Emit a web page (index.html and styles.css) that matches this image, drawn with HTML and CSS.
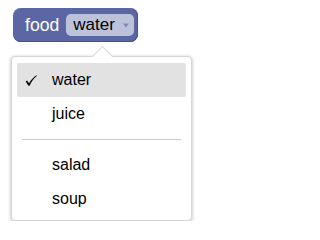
FILE: index.html
```html
<!DOCTYPE html>
<html>
<head>
<meta charset="utf-8">
<link rel="stylesheet" href="styles.css">
</head>
<body>
<div class="block">
  <span class="label">food</span>
  <span class="pill"><span class="pill-text">water</span><svg class="caret" width="6" height="5" viewBox="0 0 6 5"><path d="M0 0.5 L6 0.5 L3 4.5 Z" fill="#7d87b9"/></svg></span>
</div>
<div class="menu">
  <div class="item selected"><span class="check"><svg width="12" height="11" viewBox="0 0 12 11"><path d="M0.6 6.4 L2.2 5.6 L4 8.2 C6 4.8 8.4 2 11.6 0.2 L12 0.7 C9 3 6.6 6.4 4.6 10.8 L3.4 10.8 Z" fill="#111"/></svg></span><span class="text">water</span></div>
  <div class="item"><span class="check"></span><span class="text">juice</span></div>
  <div class="sep"></div>
  <div class="item"><span class="check"></span><span class="text">salad</span></div>
  <div class="item"><span class="check"></span><span class="text">soup</span></div>
</div>
</body>
</html>
```
FILE: styles.css
```css
html, body {
  margin: 0;
  padding: 0;
  background: #fff;
  font-family: "Liberation Sans", Arial, sans-serif;
}
.block {
  margin: 8px 0 0 13px;
  display: inline-flex;
  align-items: center;
  height: 34px;
  box-sizing: border-box;
  padding: 0 4px 0 12px;
  background: #5b67a5;
  border-radius: 8px;
  box-shadow: inset 0 -1px 0 #48528a, inset -1px 0 0 #48528a;
  gap: 7px;
}
.label {
  color: #fff;
  font-size: 17.6px;
  line-height: 20px;
}
.pill {
  display: inline-flex;
  align-items: center;
  height: 22px;
  padding: 0 5px 0 7px;
  background: #bdc2db;
  border-radius: 5px;
}
.pill-text {
  color: #000;
  font-size: 17px;
  line-height: 20px;
}
.caret {
  display: block;
  margin-left: 8px;
}
.menu {
  position: relative;
  margin: 14px 0 0 11px;
  width: 181px;
  box-sizing: border-box;
  border: 1px solid #d6d6d6;
  border-radius: 4px;
  background: #fff;
  box-shadow: 0 1px 3px 1px rgba(0,0,0,0.18);
  padding: 6px 5px 4px 5px;
}
.menu::before {
  content: "";
  position: absolute;
  left: 83px;
  top: -8px;
  width: 14px;
  height: 14px;
  background: #fff;
  border-top: 1px solid #d6d6d6;
  border-left: 1px solid #d6d6d6;
  transform: rotate(45deg);
}
.item {
  position: relative;
  display: flex;
  align-items: center;
  height: 34px;
  font-size: 16px;
  color: #000;
}
.item.selected {
  background: #e2e2e2;
  border-radius: 2px;
}
.check {
  display: flex;
  align-items: center;
  width: 35px;
  height: 11px;
  box-sizing: border-box;
  padding-left: 8px;
}
.check svg {
  display: block;
}
.sep {
  height: 1px;
  background: #cccccc;
  margin: 8px 5px;
}
```
